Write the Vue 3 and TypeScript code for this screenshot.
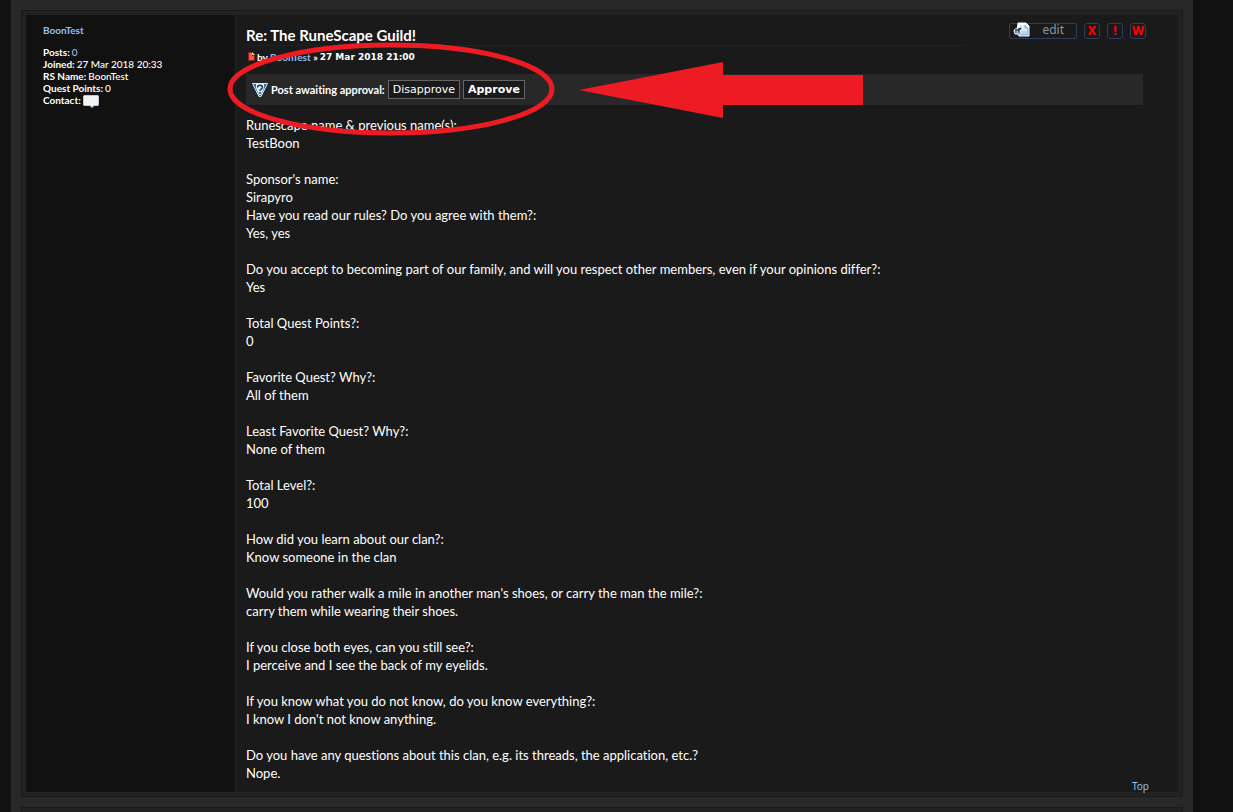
<script setup lang="ts">
interface Answer {
  q: string
  a: string
  gap?: boolean
}

const answers: Answer[] = [
  { q: 'Runescape name & previous name(s):', a: 'TestBoon', gap: true },
  { q: "Sponsor's name:", a: 'Sirapyro' },
  { q: 'Have you read our rules? Do you agree with them?:', a: 'Yes, yes', gap: true },
  { q: 'Do you accept to becoming part of our family, and will you respect other members, even if your opinions differ?:', a: 'Yes', gap: true },
  { q: 'Total Quest Points?:', a: '0', gap: true },
  { q: 'Favorite Quest? Why?:', a: 'All of them', gap: true },
  { q: 'Least Favorite Quest? Why?:', a: 'None of them', gap: true },
  { q: 'Total Level?:', a: '100', gap: true },
  { q: 'How did you learn about our clan?:', a: 'Know someone in the clan', gap: true },
  { q: "Would you rather walk a mile in another man's shoes, or carry the man the mile?:", a: 'carry them while wearing their shoes.', gap: true },
  { q: 'If you close both eyes, can you still see?:', a: 'I perceive and I see the back of my eyelids.', gap: true },
  { q: 'If you know what you do not know, do you know everything?:', a: "I know I don't not know anything.", gap: true },
  { q: 'Do you have any questions about this clan, e.g. its threads, the application, etc.?', a: 'Nope.' },
]

const tools = [
  { mark: 'X', label: 'Delete post' },
  { mark: '!', label: 'Report post' },
  { mark: 'W', label: 'Warn user' },
]
</script>

<template>
  <div class="wrap">
    <article class="card">
      <div class="post">
        <aside class="profile">
          <a class="user" href="#profile">BoonTest</a>
          <dl>
            <div><dt>Posts:</dt> <dd><a href="#posts">0</a></dd></div>
            <div><dt>Joined:</dt> <dd>27 Mar 2018 20:33</dd></div>
            <div><dt>RS Name:</dt> <dd>BoonTest</dd></div>
            <div><dt>Quest Points:</dt> <dd>0</dd></div>
            <div class="contact">
              <dt>Contact:</dt>
              <dd>
                <a href="#contact" aria-label="Contact BoonTest">
                  <svg width="16" height="14" viewBox="0 0 16 14">
                    <path d="M1 1.500h14l.5.500v9l-.5.500h-4L9 13.500 7 11.500H1L.5 11V2z" fill="#f1f3f6" stroke="#bcc8d6" />
                  </svg>
                </a>
              </dd>
            </div>
          </dl>
        </aside>

        <section class="body">
          <header class="head">
            <h3>Re: The RuneScape Guild!</h3>
            <div class="tools">
              <button class="edit" type="button">
                <svg width="17" height="16" viewBox="0 0 17 16">
                  <path d="M5 2V1h8l3 3v10H6l-1-2H2L1 9l1-2h2z" fill="#fff" stroke="#fff" stroke-linejoin="round" />
                  <path d="M7 3h5l3 3v7H8V9z" fill="#b4d9fb" />
                  <path d="M8 3h4v3h2v3H9z" fill="#dceefe" />
                  <path d="M12 3v3h3v7H7" fill="none" stroke="#86a9d2" />
                  <path d="M2 8h4l2-2M6 6v4" fill="none" stroke="#253154" stroke-width="1.5" />
                  <circle cx="3" cy="10" r="1" fill="#fff" stroke="#43547e" />
                  <circle cx="6" cy="11" r="1" fill="#fff" stroke="#5d6c92" />
                </svg>
                <span>edit</span>
              </button>
              <button v-for="t in tools" :key="t.mark" class="mark" type="button" :aria-label="t.label">{{ t.mark }}</button>
            </div>
          </header>

          <p class="author">
            <svg width="10" height="10" viewBox="0 0 10 10">
              <path d="M2 0h4l3 3v6H2z" fill="#8b2317" />
              <path d="M3 1h3v3h2v4H3z" fill="#ec5b43" />
              <path d="M6 0l3 3H6z" fill="#f6c2b8" />
            </svg>
            <span>by <a href="#profile">BoonTest</a> »</span>
            <time>27 Mar 2018 21:00</time>
          </p>

          <form class="approval" @submit.prevent>
            <svg width="16" height="16" viewBox="0 0 16 16">
              <path d="M.5 1.500h15L9 14.500H7z" fill="#2b70a6" stroke="#d5e9f8" stroke-linejoin="round" />
              <path d="M4 2h8v4L9 13H7L4 6z" fill="#e4f2fc" />
              <path d="M5.500 5.500C5.500 2.500 10.500 2.500 10.500 5.500 10.500 7 8 7 8 9M8 10v2" fill="none" stroke="#123b66" stroke-width="1.500" />
            </svg>
            <strong>Post awaiting approval:</strong>
            <button type="button">Disapprove</button>
            <button type="button" class="yes">Approve</button>
          </form>

          <div class="content">
            <p v-for="item in answers" :key="item.q" :class="{ gap: item.gap }">
              {{ item.q }}<br />{{ item.a }}
            </p>
          </div>
          <a class="top" href="#top">Top</a>
        </section>
      </div>

      <svg class="marks" width="640" height="100" viewBox="0 0 640 100" aria-hidden="true">
        <ellipse cx="165" cy="49" rx="161" ry="44" fill="none" stroke="#ed1c24" stroke-width="5" />
        <path d="M353 50L497 22V35H637V65H497V78Z" fill="#ed1c24" />
      </svg>
    </article>
    <div class="card next"></div>
  </div>
</template>

<style>
html {
  background: #111;
}
body {
  margin: 0;
}
#app {
  height: 100vh;
  overflow: hidden;
}
</style>

<style scoped>
.wrap {
  box-sizing: border-box;
  min-height: 100vh;
  margin: 0 40px 0 11px;
  padding: 10px;
  background: #282828;
  color: #fff;
  font-family: Lato, "Liberation Sans", sans-serif;
  font-variant-ligatures: none;
}
a {
  color: #8fc0f5;
  text-decoration: none;
}
h3, p, dl, dd {
  margin: 0;
}
.card {
  position: relative;
  border: 1px solid #1a1a1a;
  background: #222;
  padding: 4px;
}
.next {
  margin-top: 10px;
  height: 40px;
}
.post {
  display: flex;
  background: #1a1a1a;
}
.profile {
  flex: 0 0 192px;
  padding: 9px 0 0 17px;
  background: #111;
  border-right: 1px solid #222;
  font-size: 10px;
  line-height: 12px;
  font-weight: 500;
}
.user {
  display: block;
  margin-bottom: 10px;
  font-weight: 700;
}
dl > div {
  display: flex;
  gap: 2px;
}
dt {
  font-weight: 700;
}
dl svg {
  display: block;
}
.body {
  flex: 1;
  min-width: 0;
  display: flex;
  flex-direction: column;
  padding: 8px 35px 1px 10px;
}
.head {
  display: flex;
  justify-content: space-between;
  height: 23px;
}
h3 {
  box-sizing: border-box;
  width: 80%;
  border-bottom: 1px solid #222;
  font-size: 15px;
  line-height: 25px;
}
.tools {
  display: flex;
  gap: 7px;
  margin-right: -3px;
}
button {
  box-sizing: border-box;
  margin: 0;
  font-family: "Noto Sans", "Open Sans", sans-serif;
  background: #1a1a1a;
}
.edit {
  display: flex;
  align-items: center;
  justify-content: space-between;
  width: 68px;
  height: 16px;
  padding: 0 12px 2px 3px;
  border: 1px solid #2f3b60;
  border-radius: 2px;
  color: #8b979c;
  font-size: 12px;
  line-height: 14px;
}
.mark {
  width: 16px;
  height: 16px;
  padding: 0;
  border: 1px solid #2f3b60;
  border-radius: 3px;
  color: #f00;
  font-size: 12px;
  line-height: 14px;
  font-weight: 800;
}
.author {
  display: flex;
  align-items: center;
  gap: 1px;
  height: 14px;
  margin-top: 4px;
  font-size: 10px;
  font-weight: 700;
}
.author time {
  margin-left: 1px;
  font-family: "DejaVu Sans", sans-serif;
  font-size: 9px;
}
.approval {
  display: flex;
  align-items: center;
  gap: 3px;
  box-sizing: border-box;
  height: 31px;
  margin-top: 10px;
  padding-left: 6px;
  background: #282828;
}
.approval strong {
  font-size: 11px;
}
.approval button {
  height: 19px;
  padding: 0 4px;
  border: 1px solid #666;
  color: #fff;
  font-family: "DejaVu Sans", sans-serif;
  font-size: 11px;
  line-height: 17px;
}
.approval .yes {
  font-weight: 700;
}
.content {
  margin-top: 11px;
  font-size: 13px;
  line-height: 18px;
}
.gap {
  margin-bottom: 18px;
}
.top {
  align-self: flex-end;
  margin-right: -6px;
  font-family: "Noto Sans", sans-serif;
  font-size: 10px;
  line-height: 9px;
}
.marks {
  position: absolute;
  left: 204px;
  top: 29px;
}
</style>
